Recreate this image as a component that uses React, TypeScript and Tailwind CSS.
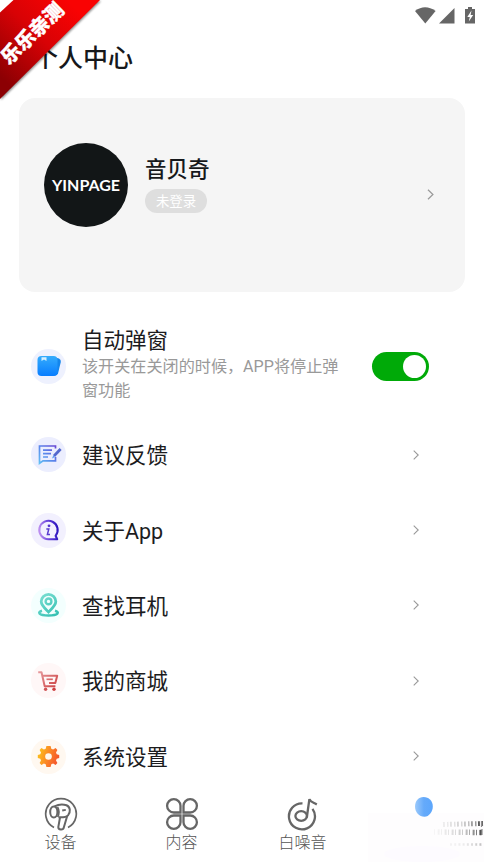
import type { ReactNode } from "react";
import clsx from "clsx";

function StatusBar() {
  return (
    <svg viewBox="0 0 64 20" className="h-5 w-16" fill="#666">
      <path d="M0 4 Q10 -3.5 20.6 4 L10.3 16.5 Z" />
      <path d="M24 16.5 H39.5 V1 Z" />
      <path d="M50 2 H53 V0 H57 V2 H60 V16.5 H50 Z" />
      <path d="M56.5 3.5 L52.3 10 H54.8 L53.8 14.5 L58.2 8 H55.6 Z" fill="#fff" />
    </svg>
  );
}

function Ribbon() {
  return (
    <div className="pointer-events-none absolute left-0 top-0 z-10 size-[104px] overflow-hidden">
      <svg viewBox="0 0 104 104" className="absolute inset-0">
        <defs>
          <linearGradient id="ribbon" x1="78" y1="10" x2="8" y2="84" gradientUnits="userSpaceOnUse">
            <stop offset="0" stopColor="#f90303" />
            <stop offset="0.45" stopColor="#d80205" />
            <stop offset="1" stopColor="#8c0003" />
          </linearGradient>
          <filter id="soft">
            <feGaussianBlur stdDeviation="1.2" />
          </filter>
        </defs>
        <path d="M14 1 H101 L1 100 V14 Z" fill="#000" opacity="0.45" filter="url(#soft)" />
        <path d="M0 0 H14 L0 13 Z" fill="#fff" />
        <path d="M13.5 0 H100 L0 99 V12.5 Z" fill="url(#ribbon)" />
      </svg>
      <span className="absolute left-[-7px] top-[22px] w-20 -rotate-[44deg] text-center text-[19.5px] font-black leading-6 text-white [-webkit-text-stroke:0.4px_white]">
        乐乐亲测
      </span>
    </div>
  );
}

function Chevron({ className }: { className?: string }) {
  return (
    <svg viewBox="0 0 6 10" className={clsx("h-2.5 w-1.5", className)} fill="none" stroke="#999" strokeWidth="1.1">
      <path d="M0.7 0.7 L5.2 5 L0.7 9.3" />
    </svg>
  );
}

function CardsIcon() {
  return (
    <svg viewBox="0 0 35 35" className="size-[35px]">
      <defs>
        <linearGradient id="cards" x1="0" y1="0" x2="0" y2="1">
          <stop offset="0" stopColor="#35acfc" />
          <stop offset="1" stopColor="#087dff" />
        </linearGradient>
      </defs>
      <path d="M22 8 L28 9.5 Q30.2 10.5 29.8 13 L27 24.5 Q26.2 27 23 26.5 Z" fill="#1486ec" />
      <rect x="6.5" y="7" width="20" height="20" rx="4" fill="url(#cards)" />
      <path d="M10.5 8.3 H15.5 V12 L13 10.6 L10.5 12 Z" fill="#d5efff" />
    </svg>
  );
}

function FeedbackIcon() {
  return (
    <svg viewBox="0 0 35 35" className="size-[35px]" fill="none" stroke="url(#feedback)" strokeWidth="1.7">
      <defs>
        <linearGradient id="feedback" x1="8" y1="27" x2="27" y2="9" gradientUnits="userSpaceOnUse">
          <stop offset="0" stopColor="#62c2f5" />
          <stop offset="0.5" stopColor="#5b83ea" />
          <stop offset="1" stopColor="#6a3fd0" />
        </linearGradient>
      </defs>
      <path d="M24.5 11.5 V9 H8.5 V26.3 L12 23.8 H24.5 V20" />
      <path d="M12 13.2 H21 M12 16.6 H20 M12 20 H17" />
      <path d="M29.6 12 L23 19" stroke="#5468ce" strokeWidth="2.8" />
      <path d="M22.3 18.2 L21 21.4 L24 20 Z" fill="#5b9cf0" stroke="none" />
    </svg>
  );
}

function AboutIcon() {
  return (
    <svg viewBox="0 0 35 35" className="size-[35px]">
      <defs>
        <linearGradient id="about" x1="7" y1="18" x2="27" y2="16" gradientUnits="userSpaceOnUse">
          <stop offset="0" stopColor="#c79af2" />
          <stop offset="0.5" stopColor="#6a45dc" />
          <stop offset="1" stopColor="#2a13bd" />
        </linearGradient>
      </defs>
      <path
        d="M17.3 26.2 A9.2 9.2 0 1 1 24.6 22.8 L26.2 26.2 Z"
        fill="none"
        stroke="url(#about)"
        strokeWidth="2.1"
        strokeLinejoin="round"
      />
      <circle cx="18" cy="12.8" r="1.4" fill="#5634cf" />
      <path d="M15.3 16 H17.8 L16.4 21.4 H19" fill="none" stroke="#5a3bd0" strokeWidth="1.5" />
    </svg>
  );
}

function FindIcon() {
  return (
    <svg viewBox="0 0 35 35" className="size-[35px]" fill="none">
      <defs>
        <linearGradient id="find" x1="10" y1="7" x2="26" y2="28" gradientUnits="userSpaceOnUse">
          <stop offset="0" stopColor="#78ded1" />
          <stop offset="1" stopColor="#31bfb1" />
        </linearGradient>
      </defs>
      <path
        d="M17.5 24 C14 20.5 10.2 17.5 10.2 13.6 A7.3 7.3 0 0 1 24.8 13.6 C24.8 17.5 21 20.5 17.5 24 Z"
        stroke="url(#find)"
        strokeWidth="2.8"
      />
      <circle cx="17.5" cy="13.4" r="2.9" stroke="url(#find)" strokeWidth="2.4" />
      <path d="M11 22.8 C6 24 7.5 27.4 17.5 27.4 C27.5 27.4 29 24 24 22.8" stroke="url(#find)" strokeWidth="2.5" />
    </svg>
  );
}

function CartIcon() {
  return (
    <svg viewBox="0 0 35 35" className="size-[35px]" fill="none" stroke="url(#cart)" strokeWidth="2" strokeLinejoin="round">
      <defs>
        <linearGradient id="cart" x1="7" y1="9" x2="25" y2="27" gradientUnits="userSpaceOnUse">
          <stop offset="0" stopColor="#e69a9d" />
          <stop offset="1" stopColor="#cc3f40" />
        </linearGradient>
      </defs>
      <path d="M7.2 9.2 H10.5 L13.7 23.3 H24.4" />
      <path d="M11.5 12.8 H26.2 L24.3 20 H18" />
      <path d="M15.5 16.3 H21.8" strokeWidth="1.7" />
      <circle cx="14.6" cy="26.3" r="1.7" fill="#d05557" stroke="none" />
      <circle cx="23" cy="26.3" r="1.7" fill="#cc3f40" stroke="none" />
    </svg>
  );
}

function GearIcon() {
  return (
    <svg viewBox="0 0 35 35" className="size-[35px]">
      <defs>
        <linearGradient id="gear" x1="7" y1="14" x2="28" y2="21" gradientUnits="userSpaceOnUse">
          <stop offset="0" stopColor="#fcc01c" />
          <stop offset="0.5" stopColor="#fb8526" />
          <stop offset="1" stopColor="#f4502c" />
        </linearGradient>
      </defs>
      <path
        d="M15.4 7 H19.6 L20.3 9.8 L22.1 10.6 L24.6 9.1 L26.4 10.9 L25 13.4 L25.7 15.3 L28.2 15.9 V19.1 L25.7 19.7 L25 21.6 L26.4 24.1 L24.6 25.9 L22.1 24.4 L20.3 25.2 L19.6 28 H15.4 L14.7 25.2 L12.9 24.4 L10.4 25.9 L8.6 24.1 L10 21.6 L9.3 19.7 L6.8 19.1 V15.9 L9.3 15.3 L10 13.4 L8.6 10.9 L10.4 9.1 L12.9 10.6 L14.7 9.8 Z"
        fill="url(#gear)"
      />
      <circle cx="17.5" cy="17.5" r="3.3" fill="#fff7ec" />
    </svg>
  );
}

const MENU = [
  { label: "建议反馈", tint: "bg-[#eceefe]", icon: <FeedbackIcon /> },
  { label: "关于App", tint: "bg-[#f2f0fe]", icon: <AboutIcon /> },
  { label: "查找耳机", tint: "bg-[#f3fffe]", icon: <FindIcon /> },
  { label: "我的商城", tint: "bg-[#fff7f7]", icon: <CartIcon /> },
  { label: "系统设置", tint: "bg-[#fff8f0]", icon: <GearIcon /> },
];

function MenuRow({ label, tint, icon }: { label: string; tint: string; icon: ReactNode }) {
  return (
    <div className="flex h-[75.4px] items-center pl-[31px] pr-[65px]">
      <div className={clsx("size-[35px] rounded-full", tint)}>{icon}</div>
      <span className="ml-4 flex-1 pt-[3px] text-[21.5px] leading-8 text-[#1c1c1e]">{label}</span>
      <Chevron />
    </div>
  );
}

function DeviceIcon() {
  return (
    <svg viewBox="0 0 34 34" className="size-[34px]" fill="none" stroke="#666" strokeWidth="1.7">
      <path d="M10 30.5 A15.3 15.3 0 1 1 24 30.5" />
      <path d="M10.5 9.3 C14 7.5 19 7 22.5 8.2 C26.5 9.8 26.8 15 24 18.3 C22 20.5 18 20.4 14.5 20.2" strokeWidth="2" />
      <ellipse cx="9.8" cy="15" rx="3.6" ry="5.5" strokeWidth="2" />
      <path d="M13.5 10 C15.2 13 15.2 17 13.7 20" />
      <path d="M16 20.5 L14.3 30 C14.2 33 19.2 33.4 19.8 30.5 L23.2 19" strokeWidth="2" />
      <path d="M18.2 13.5 L21.8 12.8" strokeWidth="1.8" />
    </svg>
  );
}

function ContentIcon() {
  return (
    <svg viewBox="0 0 34 34" className="size-[34px]" fill="none" stroke="#666" strokeWidth="2.3">
      <path d="M15.5 15.5 H8.8 A6.7 6.7 0 1 1 15.5 8.8 Z" />
      <path d="M18.5 15.5 H25.2 A6.7 6.7 0 1 0 18.5 8.8 Z" />
      <path d="M15.5 18.5 H8.8 A6.7 6.7 0 1 0 15.5 25.2 Z" />
      <path d="M18.5 18.5 H25.2 A6.7 6.7 0 1 1 18.5 25.2 Z" />
    </svg>
  );
}

function NoiseIcon() {
  return (
    <svg viewBox="0 0 34 34" className="size-[34px]" fill="none" stroke="#666" strokeWidth="2.3">
      <path d="M16.5 6.4 A13 13 0 1 0 26.5 11.8" />
      <ellipse cx="15.2" cy="19" rx="5.8" ry="4.8" />
      <path d="M20.8 20.5 L23.4 2.2 C24.5 5.2 27.5 5.5 30.8 7.4" />
    </svg>
  );
}

const TABS = [
  { label: "设备", icon: <DeviceIcon /> },
  { label: "内容", icon: <ContentIcon /> },
  { label: "白噪音", icon: <NoiseIcon /> },
];

function SmudgedTab() {
  return (
    <svg viewBox="0 0 121 75" className="h-[75px] w-[121px]">
      <defs>
        <linearGradient id="drop" x1="0" y1="0" x2="1" y2="0">
          <stop offset="0" stopColor="#9ccafb" />
          <stop offset="0.5" stopColor="#65aafa" />
          <stop offset="1" stopColor="#5ca6fc" />
        </linearGradient>
        <linearGradient id="fade" x1="74" y1="0" x2="120" y2="0" gradientUnits="userSpaceOnUse">
          <stop offset="0" stopColor="#999" stopOpacity="0.08" />
          <stop offset="0.6" stopColor="#777" stopOpacity="0.4" />
          <stop offset="1" stopColor="#222" stopOpacity="0.85" />
        </linearGradient>
        <filter id="smear">
          <feGaussianBlur stdDeviation="0.5" />
        </filter>
      </defs>
      <rect x="5" y="26" width="116" height="49" fill="#fefdfe" />
      <ellipse cx="59" cy="67" rx="38" ry="8" fill="#fdfbff" />
      <path d="M60.5 10 C66 10 69.8 14 69.8 19.5 C69.8 24.5 66 29.8 61.5 29.8 C56 29.8 52 25 52 19.5 C52 14 55.5 10 60.5 10 Z" fill="url(#drop)" />
      <g fill="none" stroke="url(#fade)" filter="url(#smear)">
        <path d="M80 37.5 L120 36.5" strokeWidth="5" strokeDasharray="1.8 2.4 1.2 1.6" />
        <path d="M71 45 L120 45.5" strokeWidth="5.5" strokeDasharray="1 2.6 2 1.4" />
        <path d="M87 57.5 L120 57.6" strokeWidth="2.5" strokeDasharray="2 2.2" strokeOpacity="0.35" />
        <path d="M116 35 V39 M118.5 34 V40 M117 43 V48 M119 42 V48" stroke="#444" strokeWidth="1.2" strokeOpacity="0.6" />
      </g>
    </svg>
  );
}

export default function App() {
  return (
    <div className="relative flex h-[862px] w-[484px] flex-col overflow-hidden bg-white font-['Roboto','Noto_Sans_CJK_SC',sans-serif]">
      <Ribbon />
      <header className="flex h-[97px] shrink-0 flex-col">
        <div className="flex h-8 justify-end pr-[5px] pt-[7px]">
          <StatusBar />
        </div>
        <h1 className="mt-[9px] pl-[33px] text-[25px] font-medium leading-9 text-[#16181b]">个人中心</h1>
      </header>

      <section className="ml-[19px] mt-px flex h-[194px] w-[446px] shrink-0 items-start rounded-2xl bg-[#f5f5f5] pl-[25px] pt-[45px]">
        <div className="flex size-[84px] items-center justify-center rounded-full bg-[#121617] font-[Lato] text-base font-bold text-white">
          YINPAGE
        </div>
        <div className="ml-[17px] flex-1 pt-[11px]">
          <h2 className="text-[21.5px] font-medium leading-8 text-[#16181b]">音贝奇</h2>
          <div className="mt-[3px] h-6 w-[62px] rounded-full bg-[#dedede] text-center text-[13.4px] leading-[25px] text-white">
            未登录
          </div>
        </div>
        <Chevron className="mr-[31px] mt-[46px] h-[11px] w-[7px]" />
      </section>

      <main className="min-h-0 flex-1 overflow-hidden pt-8">
        <div className="flex h-[93px] pl-[31px]">
          <div className="mt-[25px] size-[35px] rounded-full bg-[#eef1fe]">
            <CardsIcon />
          </div>
          <div className="ml-4 w-[261px] pt-0.5">
            <div className="text-[21.5px] leading-[30px] text-[#1c1c1e]">自动弹窗</div>
            <p className="-mt-px text-[16.12px] leading-6 text-[#999]">该开关在关闭的时候，APP将停止弹窗功能</p>
          </div>
          <button className="ml-[29px] mt-[28px] flex h-[29px] w-[57px] items-center justify-end rounded-full bg-[#00aa08] pr-[3px]">
            <span className="size-[23px] rounded-full bg-white" />
          </button>
        </div>
        {MENU.map((item) => (
          <MenuRow key={item.label} {...item} />
        ))}
      </main>

      <nav className="flex h-[75px] shrink-0 bg-white">
        {TABS.map((tab) => (
          <div key={tab.label} className="flex w-[121px] flex-col items-center pt-[10px]">
            {tab.icon}
            <span className="text-base font-light leading-6 text-[#555]">{tab.label}</span>
          </div>
        ))}
        <SmudgedTab />
      </nav>
    </div>
  );
}
